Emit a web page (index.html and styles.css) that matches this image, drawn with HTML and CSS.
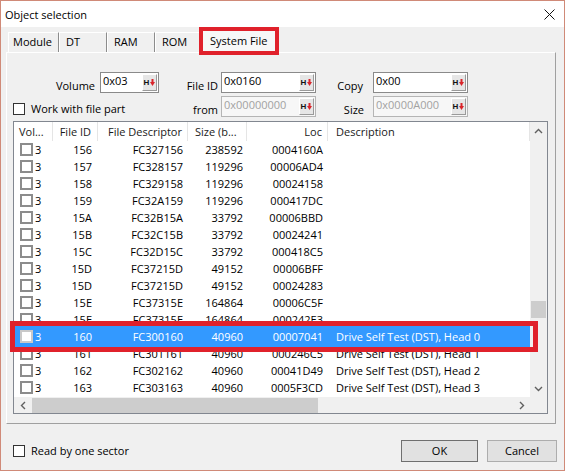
FILE: index.html
```html
<!DOCTYPE html>
<html>
<head>
<meta charset="utf-8">
<title>Object selection</title>
<link rel="stylesheet" href="styles.css">
</head>
<body>
<div class="window">
  <div class="titlebar">
    <span class="title">Object selection</span>
    <svg class="close" width="11" height="11" viewBox="0 0 11 11"><path d="M0.5 0.5 L10.5 10.5 M10.5 0.5 L0.5 10.5" stroke="#111" stroke-width="1"/></svg>
  </div>
  <div class="client">
    <div class="tabs">
      <div class="tab first">Module</div>
      <div class="tab">DT</div>
      <div class="tab">RAM</div>
      <div class="tab narrow">ROM</div>
      <div class="tab active">System File</div>
    </div>
    <div class="panel">
      <div class="form">
        <div class="lbl l1">Volume</div>
        <div class="field"><span class="val">0x03</span><span class="hbtn"><b>H</b><svg width="5" height="7" viewBox="0 0 5 7"><path d="M1.5 0 H3.5 V3 H5 L2.5 7 L0 3 H1.5 Z" fill="#d9252b"/></svg></span></div>
        <div class="lbl l2">File ID</div>
        <div class="field"><span class="val">0x0160</span><span class="hbtn"><b>H</b><svg width="5" height="7" viewBox="0 0 5 7"><path d="M1.5 0 H3.5 V3 H5 L2.5 7 L0 3 H1.5 Z" fill="#d9252b"/></svg></span></div>
        <div class="lbl l3">Copy</div>
        <div class="field"><span class="val">0x00</span><span class="hbtn"><b>H</b><svg width="5" height="7" viewBox="0 0 5 7"><path d="M1.5 0 H3.5 V3 H5 L2.5 7 L0 3 H1.5 Z" fill="#d9252b"/></svg></span></div>

        <div class="check wide"><span class="box"></span>Work with file part</div>
        <div class="lbl l2">from</div>
        <div class="field disabled"><span class="val">0x00000000</span><span class="hbtn"><b>H</b><svg width="5" height="7" viewBox="0 0 5 7"><path d="M1.5 0 H3.5 V3 H5 L2.5 7 L0 3 H1.5 Z" fill="#d9252b"/></svg></span></div>
        <div class="lbl l3s">Size</div>
        <div class="field disabled"><span class="val">0x0000A000</span><span class="hbtn"><b>H</b><svg width="5" height="7" viewBox="0 0 5 7"><path d="M1.5 0 H3.5 V3 H5 L2.5 7 L0 3 H1.5 Z" fill="#d9252b"/></svg></span></div>
      </div>

      <div class="list">
        <div class="scrollarea">
          <div class="row head">
            <div class="c1 hl">Vol...</div>
            <div class="c2">File ID</div>
            <div class="c3">File Descriptor</div>
            <div class="c4 hl">Size (b...</div>
            <div class="c5">Loc</div>
            <div class="c6">Description</div>
          </div>
          <div class="row"><div class="c1"><span class="cb"></span>3</div><div class="c2">156</div><div class="c3">FC327156</div><div class="c4">238592</div><div class="c5">0004160A</div><div class="c6"></div></div>
          <div class="row"><div class="c1"><span class="cb"></span>3</div><div class="c2">157</div><div class="c3">FC328157</div><div class="c4">119296</div><div class="c5">00006AD4</div><div class="c6"></div></div>
          <div class="row"><div class="c1"><span class="cb"></span>3</div><div class="c2">158</div><div class="c3">FC329158</div><div class="c4">119296</div><div class="c5">00024158</div><div class="c6"></div></div>
          <div class="row"><div class="c1"><span class="cb"></span>3</div><div class="c2">159</div><div class="c3">FC32A159</div><div class="c4">119296</div><div class="c5">000417DC</div><div class="c6"></div></div>
          <div class="row"><div class="c1"><span class="cb"></span>3</div><div class="c2">15A</div><div class="c3">FC32B15A</div><div class="c4">33792</div><div class="c5">00006BBD</div><div class="c6"></div></div>
          <div class="row"><div class="c1"><span class="cb"></span>3</div><div class="c2">15B</div><div class="c3">FC32C15B</div><div class="c4">33792</div><div class="c5">00024241</div><div class="c6"></div></div>
          <div class="row"><div class="c1"><span class="cb"></span>3</div><div class="c2">15C</div><div class="c3">FC32D15C</div><div class="c4">33792</div><div class="c5">000418C5</div><div class="c6"></div></div>
          <div class="row"><div class="c1"><span class="cb"></span>3</div><div class="c2">15D</div><div class="c3">FC37215D</div><div class="c4">49152</div><div class="c5">00006BFF</div><div class="c6"></div></div>
          <div class="row"><div class="c1"><span class="cb"></span>3</div><div class="c2">15D</div><div class="c3">FC37215D</div><div class="c4">49152</div><div class="c5">00024283</div><div class="c6"></div></div>
          <div class="row"><div class="c1"><span class="cb"></span>3</div><div class="c2">15E</div><div class="c3">FC37315E</div><div class="c4">164864</div><div class="c5">00006C5F</div><div class="c6"></div></div>
          <div class="row"><div class="c1"><span class="cb"></span>3</div><div class="c2">15E</div><div class="c3">FC37315E</div><div class="c4">164864</div><div class="c5">000242E3</div><div class="c6"></div></div>
          <div class="row selected"><div class="c1"><span class="cb"></span>3</div><div class="c2">160</div><div class="c3">FC300160</div><div class="c4">40960</div><div class="c5">00007041</div><div class="c6">Drive Self Test (DST), Head 0</div></div>
          <div class="row"><div class="c1"><span class="cb"></span>3</div><div class="c2">161</div><div class="c3">FC301161</div><div class="c4">40960</div><div class="c5">000246C5</div><div class="c6">Drive Self Test (DST), Head 1</div></div>
          <div class="row"><div class="c1"><span class="cb"></span>3</div><div class="c2">162</div><div class="c3">FC302162</div><div class="c4">40960</div><div class="c5">00041D49</div><div class="c6">Drive Self Test (DST), Head 2</div></div>
          <div class="row"><div class="c1"><span class="cb"></span>3</div><div class="c2">163</div><div class="c3">FC303163</div><div class="c4">40960</div><div class="c5">0005F3CD</div><div class="c6">Drive Self Test (DST), Head 3</div></div>
        </div>
        <div class="vscroll">
          <div class="sbtn"><svg width="9" height="6" viewBox="0 0 9 6"><path d="M1 5 L4.5 1.5 L8 5" fill="none" stroke="#606060" stroke-width="1.4"/></svg></div>
          <div class="vtrack"><div class="vthumb"></div></div>
          <div class="sbtn"><svg width="9" height="6" viewBox="0 0 9 6"><path d="M1 1 L4.5 4.5 L8 1" fill="none" stroke="#606060" stroke-width="1.4"/></svg></div>
        </div>
        <div class="hscroll">
          <div class="hbtn-s"><svg width="6" height="9" viewBox="0 0 6 9"><path d="M5 1 L1.5 4.5 L5 8" fill="none" stroke="#606060" stroke-width="1.4"/></svg></div>
          <div class="htrack"><div class="hthumb"></div></div>
          <div class="hbtn-s"><svg width="6" height="9" viewBox="0 0 6 9"><path d="M1 1 L4.5 4.5 L1 8" fill="none" stroke="#606060" stroke-width="1.4"/></svg></div>
        </div>
        <div class="corner"></div>
        <div class="mark-row"></div>
      </div>
    </div>
    <div class="footer">
      <div class="check"><span class="box"></span>Read by one sector</div>
      <div class="buttons">
        <button class="btn ok">OK</button>
        <button class="btn cancel">Cancel</button>
      </div>
    </div>
  </div>
</div>
</body>
</html>
```

FILE: styles.css
```css
* { box-sizing: border-box; }
html, body { margin: 0; padding: 0; }
body {
  width: 565px;
  height: 471px;
  overflow: hidden;
  background: #fff;
  font-family: "Open Sans", "Noto Sans", sans-serif;
  font-size: 11px;
  color: #000;
}

.window {
  width: 565px;
  height: 471px;
  border: 1px solid #d08a78;
  display: flex;
  flex-direction: column;
}

.titlebar {
  flex: none;
  height: 26px;
  background: #fff;
  display: flex;
  align-items: center;
  justify-content: space-between;
  padding: 0 9px 0 4px;
}
.title { line-height: 26px; padding-top: 1px; }
.close { display: block; }

.client {
  flex: 1;
  background: #f0f0f0;
  padding: 3px 0 0 5px;
  display: flex;
  flex-direction: column;
}

/* tabs */
.tabs {
  display: flex;
  align-items: flex-end;
  height: 22px;
  padding-left: 2px;
  position: relative;
  z-index: 2;
}
.tab {
  height: 20px;
  line-height: 18px;
  width: 48px;
  padding-left: 6px;
  border-top: 1px solid #fff;
  border-left: 1px solid #fff;
  border-right: 1px solid #8c8c8c;
  background: #f0f0f0;
  white-space: nowrap;
}
.tab.first { width: 51px; padding-left: 4px; }
.tab.narrow { width: 45px; }
.tab.active {
  position: relative;
  width: 76px;
  height: 23px;
  margin-left: 1px;
  margin-bottom: -1px;
  line-height: 19px;
  padding-left: 8px;
  background: #f7f7f7;
}
.tab.active::after {
  content: "";
  position: absolute;
  left: -3px;
  right: -3px;
  top: -4px;
  bottom: -2px;
  border: 4px solid #e0212b;
}

/* panel */
.panel {
  width: 550px;
  height: 372px;
  border: 1px solid #a0a0a0;
  border-top-color: #fff;
  border-left-color: #fff;
  padding: 19px 0 0 6px;
}

.form {
  display: grid;
  grid-template-columns: 87px 59px 62px 95px 57px 95px;
  grid-template-rows: 21px 21px;
  row-gap: 3px;
}
.lbl {
  display: flex;
  align-items: flex-end;
  justify-content: flex-end;
  line-height: 14px;
  padding-bottom: 0;
}
.l1 { padding-right: 5px; }
.l2 { padding-right: 3px; }
.l3 { padding-right: 10px; }
.l3s { padding-right: 9px; }

.field {
  display: flex;
  justify-content: space-between;
  height: 21px;
  background: #fff;
  border: 1px solid #8a8a8a;
  padding: 1px 1px 1px 2px;
}
.field .val { line-height: 14px; }
.field.disabled { background: #f7f7f7; border-color: #b5b5b5; color: #a2a2a2; }
.hbtn {
  width: 15px;
  height: 17px;
  border: 1px solid;
  border-color: #fff #9a9a9a #9a9a9a #fff;
  background: #e6e6e6;
  display: flex;
  align-items: center;
  justify-content: center;
  gap: 1px;
}
.hbtn b {
  font-family: "Liberation Sans", Arial, sans-serif;
  font-weight: bold;
  font-size: 8px;
  line-height: 8px;
  color: #111;
}
.hbtn svg { display: block; }

.check {
  display: flex;
  align-items: center;
  line-height: 14px;
}
.check.wide {
  grid-column: 1 / span 2;
  align-items: flex-end;
  padding-bottom: 1px;
}
.box {
  width: 12px;
  height: 12px;
  border: 1px solid #333;
  background: #fff;
  margin-right: 6px;
  flex: none;
}
.check.wide .box { margin-bottom: 1px; }

/* list */
.list {
  position: relative;
  margin-top: 4px;
  width: 535px;
  height: 293px;
  border: 1px solid #828790;
  background: #fff;
  display: grid;
  grid-template-columns: 516px 17px;
  grid-template-rows: 275px 16px;
}
.scrollarea { overflow: hidden; background: #fff; }

.row {
  display: grid;
  grid-template-columns: 39px 45px 90px 59px 81px 202px;
  height: 17px;
  line-height: 17px;
  white-space: nowrap;
}
.row > div { overflow: hidden; }
.row.head { height: 19px; line-height: 19px; color: #1a1a1a; }
.row.head > div { border-right: 1px solid #e5e5e5; }
.c1 { display: flex; align-items: center; padding-left: 6px; }
.c2 { text-align: right; padding-right: 6px; }
.c3 { text-align: right; padding-right: 5px; }
.c4 { text-align: right; padding-right: 4px; }
.c5 { text-align: right; padding-right: 5px; }
.c6 { padding-left: 8px; }
.row.head .c1 { padding-left: 5px; }
.row.head .c4 { text-align: left; padding-left: 7px; }

.cb {
  width: 13px;
  height: 13px;
  border: 2px solid #8c8c8c;
  background: #fff;
  margin-right: 2px;
  flex: none;
}
.row.selected {
  background: #3399ff;
  color: #fff;
  box-shadow: 0 0 0 3px #3399ff;
  position: relative;
}
.row.selected .cb { border-color: #c9c9c9; }

.vscroll {
  background: #f0f0f0;
  display: flex;
  flex-direction: column;
}
.sbtn {
  flex: none;
  height: 17px;
  display: flex;
  align-items: center;
  justify-content: center;
}
.vtrack { flex: 1; }
.vthumb {
  margin-top: 162px;
  margin-left: 1px;
  width: 15px;
  height: 17px;
  background: #cdcdcd;
}

.hscroll {
  background: #f0f0f0;
  display: flex;
}
.hbtn-s {
  flex: none;
  width: 17px;
  display: flex;
  align-items: center;
  justify-content: center;
}
.htrack { flex: 1; display: flex; align-items: center; }
.hthumb {
  margin-left: 1px;
  width: 286px;
  height: 15px;
  background: #cdcdcd;
}
.corner { background: #f0f0f0; }

.mark-row {
  position: absolute;
  left: -4px;
  top: 199px;
  width: 528px;
  height: 31px;
  border: 5px solid #e0212b;
  pointer-events: none;
}

/* footer */
.footer {
  display: flex;
  align-items: center;
  justify-content: space-between;
  width: 551px;
  height: 22px;
  margin-top: 16px;
  padding-left: 7px;
}
.buttons { display: flex; gap: 9px; }
.btn {
  font: inherit;
  color: #000;
  height: 22px;
  padding: 0;
  background: #e1e1e1;
  border: 1px solid #adadad;
  line-height: 18px;
}
.btn.ok { width: 77px; border-color: #6f6f6f; }
.btn.cancel { width: 70px; }
```
